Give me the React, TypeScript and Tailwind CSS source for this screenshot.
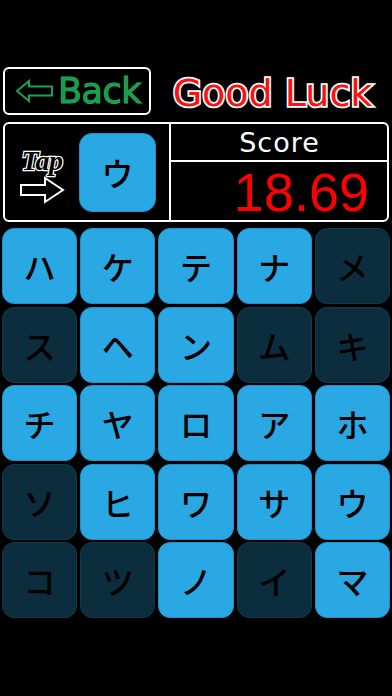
import React from "react";

const rows: [string, boolean][][] = [
  [["ハ", true], ["ケ", true], ["テ", true], ["ナ", true], ["メ", false]],
  [["ス", false], ["ヘ", true], ["ン", true], ["ム", false], ["キ", false]],
  [["チ", true], ["ヤ", true], ["ロ", true], ["ア", true], ["ホ", true]],
  [["ソ", false], ["ヒ", true], ["ワ", true], ["サ", true], ["ウ", true]],
  [["コ", false], ["ツ", false], ["ノ", true], ["イ", false], ["マ", true]],
];

const jp = { fontFamily: '"Noto Sans CJK JP", "Noto Sans", sans-serif' };
const wide = { fontFamily: '"DejaVu Sans", "Liberation Sans", sans-serif' };

export default function App() {
  return (
    <div className="w-[392px] h-[696px] bg-black overflow-hidden">
      <div className="h-[67px]" />
      <div className="flex items-center h-[48px]">
        <div className="ml-[3px] w-[148px] h-[48px] border-2 border-white rounded-[6px] flex items-center pl-[10px]">
          <svg width="40" height="24" viewBox="0 0 40 24" className="mr-[3px]">
            <path d="M2 12 L14 2 L14 7.5 L37 7.5 L37 16.5 L14 16.5 L14 22 Z" fill="none" stroke="#1fa055" strokeWidth="2" strokeLinejoin="miter" />
          </svg>
          <span
            className="text-[35px] text-[#1c9a4c] leading-none [-webkit-text-stroke:1px_#22a855] tracking-[-0.5px]"
            style={wide}
          >
            Back
          </span>
        </div>
        <div className="flex-1 flex justify-center pl-[2px] pt-[4px]">
          <span
            className="text-[38px] text-[#ff1010] leading-none tracking-[0px] [-webkit-text-stroke:3.5px_white] [paint-order:stroke_fill]"
            style={wide}
          >
            Good Luck
          </span>
        </div>
      </div>
      <div className="mt-[7px] mx-[3px] h-[100px] border-2 border-white rounded-[6px] flex">
        <div className="w-[164px] flex items-center">
          <div className="w-[74px] flex flex-col items-center justify-center pt-[6px]">
            <span
              className="text-[28px] italic font-black text-black leading-none [-webkit-text-stroke:2.5px_white] [paint-order:stroke_fill] tracking-[-0.5px]"
              style={{ fontFamily: '"Liberation Serif", serif' }}
            >
              Tap
            </span>
            <svg width="46" height="28" viewBox="0 0 46 28" className="mt-[1px]">
              <path d="M2 9 L26 9 L26 2 L44 14 L26 26 L26 19 L2 19 Z" fill="none" stroke="white" strokeWidth="2" />
            </svg>
          </div>
          <div className="w-[77px] h-[79px] rounded-[13px] bg-[#29a8e4] border border-[#1e90cc] flex items-center justify-center">
            <span className="text-[32px] font-medium text-black leading-none" style={jp}>ウ</span>
          </div>
        </div>
        <div className="flex-1 border-l-2 border-white flex flex-col">
          <div className="h-[38px] border-b-2 border-white flex items-center justify-center">
            <span className="text-[27px] text-white leading-none tracking-[1px] pl-[1px]" style={wide}>Score</span>
          </div>
          <div className="flex-1 flex items-center justify-end pr-[18px] pt-[2px]">
            <span
              className="text-[54px] text-[#ff0000] leading-none"
              style={{ fontFamily: '"Liberation Sans", Arial, sans-serif' }}
            >
              18.69
            </span>
          </div>
        </div>
      </div>
      <div className="mt-[6px] px-[2px] flex flex-col gap-[2.5px]">
        {rows.map((row, i) => (
          <div key={i} className="grid grid-cols-5 gap-[3px]">
            {row.map(([ch, light], j) => (
              <div
                key={j}
                className={
                  light
                    ? "h-[76px] rounded-[12px] bg-[#29a8e4] border border-[#1e90cc] flex items-center justify-center"
                    : "h-[76px] rounded-[12px] bg-[#0b2d3e] border border-[#0f3a50] flex items-center justify-center"
                }
              >
                <span className="text-[32px] font-medium text-black leading-none" style={jp}>{ch}</span>
              </div>
            ))}
          </div>
        ))}
      </div>
    </div>
  );
}
